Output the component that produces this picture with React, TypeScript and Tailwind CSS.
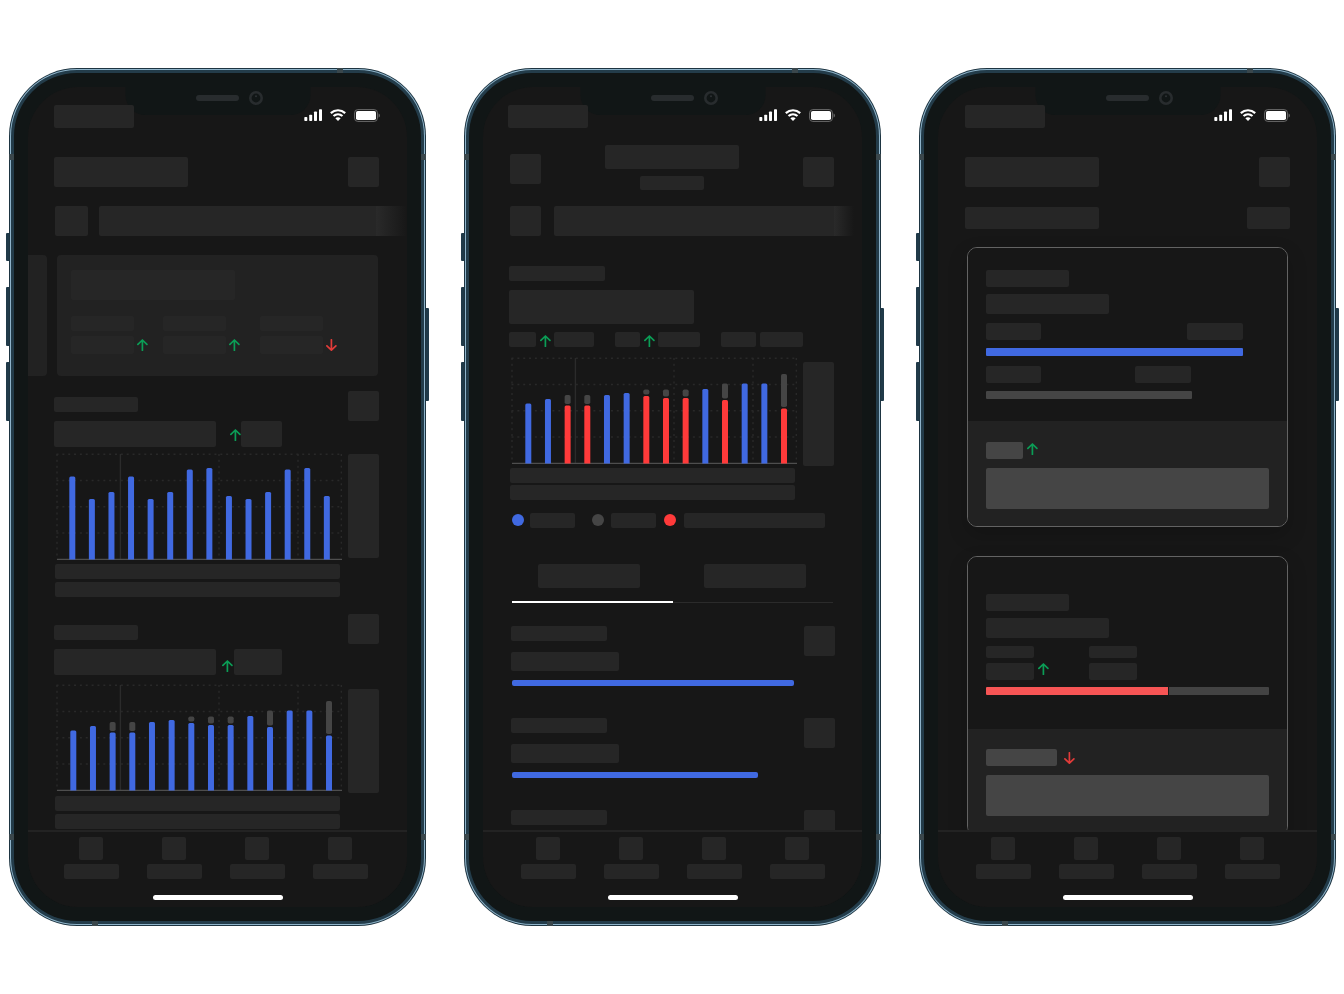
import type { ReactNode } from "react";

type Tone = "base" | "soft" | "light";

interface BlockProps {
  className: string;
  tone?: Tone;
}

interface ChartBar {
  value: number;
  rest?: number;
  over?: boolean;
}

interface PhoneProps {
  inset: string;
  statusInset: string;
  navInset: string;
  children: ReactNode;
}

const tones: Record<Tone, string> = {
  base: "bg-[#262626]",
  soft: "bg-[#262626]",
  light: "bg-[#454545]",
};

// Skeleton placeholder
const Block = ({ className, tone = "base" }: BlockProps) => (
  <div className={`shrink-0 rounded-[2px] ${tones[tone]} ${className}`} />
);

const Arrow = ({ down = false }: { down?: boolean }) => (
  <svg
    viewBox="0 0 12 12"
    className={`size-3 shrink-0 ${down ? "text-[#e23b39]" : "text-[#0b9d56]"}`}
    fill="none"
    stroke="currentColor"
    strokeWidth="1.7"
    strokeLinecap="round"
    strokeLinejoin="round"
  >
    {down ? <path d="M6.400 .8v10.4M1.900 6.800 6.400 11.200l4.500-4.400" /> : <path d="M6.400 11.400V1M1.900 5.400 6.400 1l4.500 4.400" />}
  </svg>
);

const StatusIcons = () => (
  <div className="mt-1 flex items-start gap-2 text-white">
    <svg viewBox="0 0 18 12" className="h-3 w-[18px]" fill="currentColor">
      <rect x="0.3" y="8" width="3" height="4" rx="0.8" />
      <rect x="5.2" y="5.8" width="3" height="6.2" rx="0.8" />
      <rect x="10" y="2.4" width="3" height="9.600" rx="0.8" />
      <rect x="15" y="0.2" width="3" height="11.8" rx="0.8" />
    </svg>
    <svg viewBox="0 0 16 12" className="h-3 w-4" fill="none" stroke="currentColor" strokeWidth="2.200">
      <path d="M.8 4.1C4.9.3 11.1.3 15.2 4.1" />
      <path d="M3.5 7c2.6-2.3 6.4-2.3 9 0" />
      <path d="M5.300 9.200c1.600-1.400 3.800-1.400 5.400 0L8 12z" fill="currentColor" stroke="none" />
    </svg>
    <svg viewBox="0 0 26 13" className="h-[13px] w-[26px]">
      <rect x="0.6" y="0.6" width="22.8" height="11.8" rx="3.2" fill="none" stroke="#6b6b6b" />
      <rect x="2" y="2" width="20" height="9" rx="1.8" fill="#fff" />
      <path d="M24.6 4.6v4c.8-.3 1.3-1.1 1.3-2s-.5-1.7-1.3-2z" fill="#6b6b6b" />
    </svg>
  </div>
);

const BASE = 106.5;

const revenue: ChartBar[] = [83, 60.5, 67.5, 83, 60.5, 67.5, 90, 91.5, 63.5, 60.5, 67.5, 90, 91.5, 63.5].map((value) => ({ value }));

const spending: ChartBar[] = [
  { value: 60 },
  { value: 64.5 },
  { value: 58, rest: 9, over: true },
  { value: 58, rest: 9, over: true },
  { value: 68.5 },
  { value: 70.5 },
  { value: 67.5, rest: 5, over: true },
  { value: 65.5, rest: 7, over: true },
  { value: 65.5, rest: 7, over: true },
  { value: 74.5 },
  { value: 63.5, rest: 15, over: true },
  { value: 80 },
  { value: 80 },
  { value: 55, rest: 33, over: true },
];

const BarChart = ({ bars, start, step, highlight = false }: { bars: ChartBar[]; start: number; step: number; highlight?: boolean }) => (
  <svg viewBox="0 0 286 107" className="min-w-0 flex-1">
    <g stroke="#292929" strokeWidth="1.5" strokeDasharray="2 3.85">
      {[1.3, 27.5, 53.7, 80].map((y) => (
        <line key={y} x1="0.5" x2="286" y1={y} y2={y} />
      ))}
      {[1, 163, 242, 285.4].map((x) => (
        <line key={x} x1={x} x2={x} y1="1" y2={BASE} />
      ))}
    </g>
    <line x1="64.4" x2="64.4" y1="1" y2={BASE} stroke="#2b2b2b" strokeWidth="1.4" />
    <line x1="1" x2="286" y1="106.4" y2="106.4" stroke="#4e4e4e" strokeWidth="1.2" />
    {bars.map((bar, i) => {
      const x = start + i * step - 3;
      const top = BASE - bar.value;
      return (
        <g key={i}>
          <path
            d={`M${x} ${BASE}V${top + 1.5}q0-1.5 1.5-1.5h3q1.5 0 1.5 1.5V${BASE}z`}
            fill={highlight && bar.over ? "#ff3a3a" : "#4069e1"}
          />
          {bar.rest && <rect x={x} y={top - bar.rest - 1.5} width="6" height={bar.rest} rx="1.8" fill="#454545" />}
        </g>
      );
    })}
  </svg>
);

const ChipRow = ({ chip, bar, fade }: { chip: string; bar: string; fade: string }) => (
  <div className="ml-px -mr-7 flex justify-start">
    <Block className={`h-[30px] ${chip}`} />
    <div className={`h-[30px] rounded-l-[2px] bg-[#262626] ${bar}`} />
    <div className={`h-[30px] bg-gradient-to-r from-[#2a2a2a] to-[#171717] ${fade}`} />
  </div>
);

const Band = ({ className }: { className: string }) => <div className={`absolute bg-[#3a474c] ${className}`} />;

const Phone = ({ inset, statusInset, navInset, children }: PhoneProps) => (
  <div className="relative">
    {/* Side buttons */}
    <div className="absolute top-[165px] -left-[3px] h-7 w-1 rounded-l-[1px] bg-[#203a49]" />
    <div className="absolute top-[219px] -left-[3px] h-[59px] w-1 rounded-l-[1px] bg-[#203a49]" />
    <div className="absolute top-[294px] -left-[3px] h-[59px] w-1 rounded-l-[1px] bg-[#203a49]" />
    <div className="absolute top-[240px] -right-[3px] h-[93px] w-1 rounded-r-[1px] bg-[#203a49]" />

    {/* Frame */}
    <div className="relative rounded-[68px] bg-[#1d3441] p-px">
      <div className="rounded-[67px] bg-[#8fb4ca] p-px">
        <div className="rounded-[66px] bg-[#233c4a] p-[3px]">
          <div className="rounded-[63px] bg-[#111616] p-[14px]">
            <div className="relative overflow-hidden rounded-[50px] bg-[#171717]">
              {/* Notch */}
              <div className="absolute top-0 left-1/2 h-7 w-[185px] -translate-x-1/2 rounded-b-[20px] bg-[#111616]" />
              <div className="relative h-[743px] overflow-hidden">
                <div className={`flex items-start justify-between pt-[18px] pr-[27px] ${statusInset}`}>
                  <Block className="h-[23px] w-20" />
                  <StatusIcons />
                </div>
                <div className={inset}>{children}</div>
              </div>
              <div className="relative border-t-2 border-[#232323] bg-[#171717] pt-[5px] pb-[7px]">
                <div className={`flex justify-between ${navInset}`}>
                  {[0, 1, 2, 3].map((i) => (
                    <div key={i} className="flex flex-col gap-1">
                      <Block className="ml-[15px] h-[23px] w-6" />
                      <Block className="h-[15px] w-[55px]" />
                    </div>
                  ))}
                </div>
                <div className="mx-auto mt-4 h-[5px] w-[130px] rounded-full bg-white" />
              </div>
            </div>
          </div>
        </div>
      </div>

      {/* Speaker and camera */}
      <div className="absolute top-[27px] left-[187px] h-[6px] w-[43px] rounded-full bg-[#282c2e]" />
      <svg viewBox="0 0 14 14" className="absolute top-[23px] left-[240px] size-[14px]" fill="none">
        <circle cx="7" cy="7" r="5.7" stroke="#282c2e" strokeWidth="2.6" />
        <circle cx="7" cy="5.2" r="1" fill="#2d3234" />
      </svg>

      <Band className="top-0 right-[83px] h-[5px] w-[6px]" />
      <Band className="bottom-0 left-[83px] h-[5px] w-[6px]" />
      <Band className="top-[86px] left-0 h-[6px] w-[5px]" />
      <Band className="top-[86px] right-0 h-[6px] w-[5px]" />
      <Band className="bottom-[86px] left-0 h-[6px] w-[5px]" />
      <Band className="right-0 bottom-[86px] h-[6px] w-[5px]" />
    </div>
  </div>
);

const OverviewScreen = () => (
  <Phone inset="pl-[26px] pr-7" statusInset="pl-[26px]" navInset="pl-9 pr-[39px]">
    <div className="mt-[29px] mb-[19px] flex justify-between">
      <Block className="h-[30px] w-[134px]" />
      <Block className="h-[30px] w-[31px]" />
    </div>
    <ChipRow chip="mr-[11px] w-[33px]" bar="flex-1" fade="w-[31px]" />

    {/* Summary cards */}
    <div className="mt-[19px] mr-px -ml-[26px] flex gap-[10px]">
      <div className="w-[19px] rounded-r bg-[#222222]" />
      <div className="flex-1 rounded bg-[#222222] pt-[15px] pb-[22px] pl-[14px]">
        <Block tone="soft" className="h-[30px] w-[164px]" />
        <div className="mt-4 grid grid-cols-[92px_97px_1fr]">
          {[false, false, true].map((down, i) => (
            <div key={i}>
              <Block tone="soft" className="h-[15px] w-[63px]" />
              <div className="mt-[5px] flex items-center gap-[2px]">
                <Block tone="soft" className="h-[18px] w-[63px]" />
                <Arrow down={down} />
              </div>
            </div>
          ))}
        </div>
      </div>
    </div>

    {/* Revenue */}
    <section className="mt-[15px]">
      <div className="flex justify-between">
        <Block className="mt-[6px] h-[15px] w-[84px]" />
        <Block className="h-[30px] w-[31px]" />
      </div>
      <div className="flex items-center">
        <Block className="mr-[13px] h-[26px] w-[162px]" />
        <div className="mt-[2px]">
          <Arrow />
        </div>
        <Block className="h-[26px] w-[41px]" />
      </div>
      <div className="mt-[6px] ml-[2px] flex items-start gap-[6px]">
        <BarChart bars={revenue} start={16.3} step={19.58} />
        <Block className="mt-px h-[104px] w-[31px]" />
      </div>
      <div className="mt-1 mr-[39px] ml-px flex flex-col gap-[3px]">
        <Block className="h-[15px]" />
        <Block className="h-[15px]" />
      </div>
    </section>

    {/* Spending */}
    <section className="mt-[17px]">
      <div className="flex justify-between">
        <Block className="mt-[11px] h-[15px] w-[84px]" />
        <Block className="h-[30px] w-[31px]" />
      </div>
      <div className="mt-[5px] flex items-end">
        <Block className="mr-[5px] h-[26px] w-[162px]" />
        <div className="mb-[3px]">
          <Arrow />
        </div>
        <Block className="ml-px h-[26px] w-12" />
      </div>
      <div className="mt-[9px] ml-[2px] flex items-start gap-[6px]">
        <BarChart bars={spending} start={17.3} step={19.67} />
        <Block className="mt-[5px] h-[104px] w-[31px]" />
      </div>
      <div className="mt-[3px] mr-[39px] ml-px flex flex-col gap-[3px]">
        <Block className="h-[15px]" />
        <Block className="h-[15px]" />
      </div>
    </section>
  </Phone>
);

const DetailScreen = () => (
  <Phone inset="pl-[26px] pr-7" statusInset="pl-[25px]" navInset="pl-[38px] pr-[37px]">
    <div className="mt-[17px] mb-4 ml-px flex items-start justify-between">
      <Block className="mt-[9px] h-[30px] w-[31px]" />
      <div className="flex flex-col items-center gap-[7px]">
        <Block className="h-6 w-[134px]" />
        <Block className="h-[14px] w-16" />
      </div>
      <Block className="mt-3 h-[30px] w-[31px]" />
    </div>
    <ChipRow chip="mr-[13px] w-[31px]" bar="mr-0 w-[280px]" fade="w-5" />

    <Block className="mt-[30px] h-[15px] w-24" />
    <Block className="mt-[9px] h-[34px] w-[185px]" />
    <div className="mt-2 flex gap-[21px]">
      <div className="flex items-end gap-[3px]">
        <Block className="h-[15px] w-[27px]" />
        <Arrow />
        <Block className="h-[15px] w-10" />
      </div>
      <div className="flex items-end gap-[3px]">
        <Block className="h-[15px] w-[25px]" />
        <Arrow />
        <Block className="h-[15px] w-[42px]" />
      </div>
      <div className="flex gap-1">
        <Block className="h-[15px] w-[35px]" />
        <Block className="h-[15px] w-[43px]" />
      </div>
    </div>

    <div className="mt-[10px] ml-[2px] flex items-start gap-[6px]">
      <BarChart bars={spending} start={17.3} step={19.67} highlight />
      <Block className="mt-[5px] h-[104px] w-[31px]" />
    </div>
    <div className="mt-[2px] mr-[39px] ml-px flex flex-col gap-[2px]">
      <Block className="h-[15px]" />
      <Block className="h-[15px]" />
    </div>

    {/* Legend */}
    <div className="mt-[13px] ml-[3px] flex items-start">
      <span className="mt-px mr-[6px] size-3 rounded-full bg-[#4069e1]" />
      <Block className="mr-[17px] h-[15px] w-[45px]" />
      <span className="mt-px mr-[7px] size-3 rounded-full bg-[#454545]" />
      <Block className="mr-2 h-[15px] w-[45px]" />
      <span className="mt-px mr-2 size-3 rounded-full bg-[#ff3a3a]" />
      <Block className="h-[15px] w-[141px]" />
    </div>

    {/* Tabs */}
    <div className="mt-9 mr-px ml-[3px] grid grid-cols-2 items-end">
      <div className="border-b-2 border-white pb-[13px] pl-[26px]">
        <Block className="h-6 w-[102px]" />
      </div>
      <div className="border-b border-[#2b2b2b] pb-[14px] pl-[31px]">
        <Block className="h-6 w-[102px]" />
      </div>
    </div>

    <div className="mt-[23px] -mr-px ml-[2px] flex flex-col gap-8">
      {[88, 76.6, 60].map((percent) => (
        <div key={percent}>
          <div className="flex items-start justify-between">
            <div>
              <Block className="h-[15px] w-24" />
              <Block className="mt-[11px] h-[19px] w-[108px]" />
            </div>
            <Block className="h-[30px] w-[31px]" />
          </div>
          <div className="mt-[9px] mr-[2px] ml-px">
            <div className="h-[6px] rounded-[2px] bg-[#4069e1]" style={{ width: `${percent}%` }} />
          </div>
        </div>
      ))}
    </div>
  </Phone>
);

const CARD = "mx-[2px] overflow-hidden rounded-[10px] border border-[#636363] shadow-[0_8px_20px_rgba(0,0,0,0.18)]";

const InsightsScreen = () => (
  <Phone inset="px-[27px]" statusInset="pl-[27px]" navInset="pl-[38px] pr-[37px]">
    <div className="mt-[29px] flex justify-between">
      <Block className="h-[30px] w-[134px]" />
      <Block className="h-[30px] w-[31px]" />
    </div>
    <div className="mt-5 flex justify-between">
      <Block className="h-[22px] w-[134px]" />
      <Block className="h-[22px] w-[43px]" />
    </div>

    <article className={`mt-[18px] ${CARD}`}>
      <div className="bg-[#171717] px-[18px] pt-[22px] pb-[22px]">
        <Block className="h-[17px] w-[83px]" />
        <Block className="mt-[7px] h-5 w-[123px]" />
        <div className="mt-[9px] flex justify-between pr-[26px]">
          <Block className="h-[17px] w-[55px]" />
          <Block className="h-[17px] w-14" />
        </div>
        <div className="mt-2 h-2 rounded-[1px] bg-[#4069e1]" style={{ width: "90.8%" }} />
        <div className="mt-[10px] flex justify-between pr-[78px]">
          <Block className="h-[17px] w-[55px]" />
          <Block className="h-[17px] w-14" />
        </div>
        <div className="mt-2 h-2 rounded-[1px] bg-[#454545]" style={{ width: "72.7%" }} />
      </div>
      <div className="bg-[#222222] px-[18px] pt-[21px] pb-[17px]">
        <div className="flex items-start gap-[3px]">
          <Block tone="light" className="h-[17px] w-[37px]" />
          <div className="mt-px">
            <Arrow />
          </div>
        </div>
        <Block tone="light" className="mt-[9px] h-[41px]" />
      </div>
    </article>

    <article className={`mt-[29px] ${CARD}`}>
      <div className="bg-[#171717] px-[18px] pt-[37px] pb-[34px]">
        <Block className="h-[17px] w-[83px]" />
        <Block className="mt-[7px] h-5 w-[123px]" />
        <div className="mt-2 grid grid-cols-[103px_1fr] gap-y-[5px]">
          <Block className="h-3 w-12" />
          <Block className="h-3 w-12" />
          <div className="flex gap-[3px]">
            <Block className="h-[17px] w-12" />
            <Arrow />
          </div>
          <Block className="h-[17px] w-12" />
        </div>
        <div className="mt-[7px] flex gap-px">
          <div className="h-2 rounded-l-[1px] bg-[#f75555]" style={{ width: "64.2%" }} />
          <div className="h-2 flex-1 rounded-r-[1px] bg-[#434343]" />
        </div>
      </div>
      <div className="bg-[#222222] px-[18px] pt-5 pb-[19px]">
        <div className="flex items-center gap-[6px]">
          <Block tone="light" className="h-[17px] w-[71px]" />
          <Arrow down />
        </div>
        <Block tone="light" className="mt-[9px] h-[41px]" />
      </div>
    </article>
  </Phone>
);

export default function App() {
  return (
    <main className="flex min-h-screen items-center bg-white pr-2 pl-[9px] font-['Inter',sans-serif]">
      <div className="grid flex-1 grid-cols-3 gap-[38px]">
        <OverviewScreen />
        <DetailScreen />
        <InsightsScreen />
      </div>
    </main>
  );
}
